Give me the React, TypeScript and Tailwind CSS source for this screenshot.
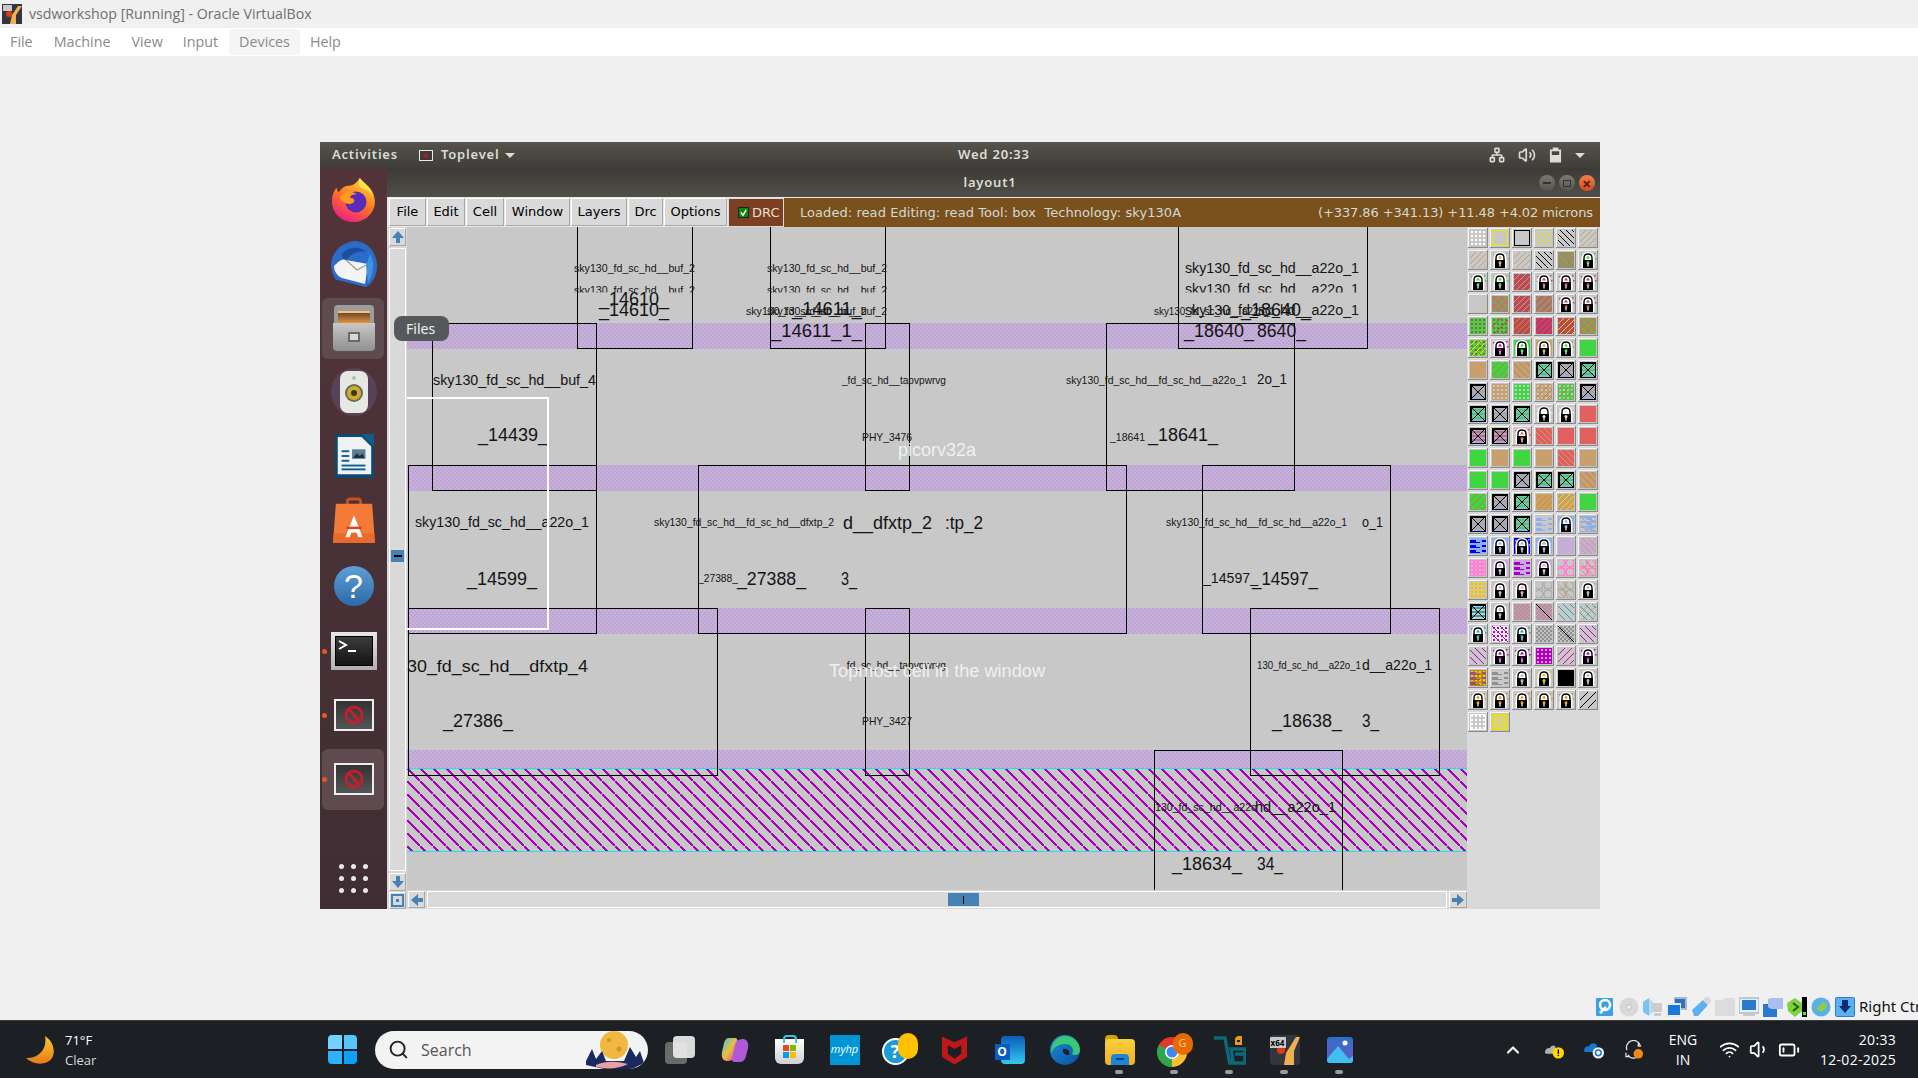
import { BatteryLow, ChevronUp, Network, Search, Volume1, Volume2, Wifi } from "lucide-react";
import React from "react";

const G = "#3fd63f";
const T = "#c8a070";
const R = "#e06060";
const D = "#b84a5a";
const B = "#8cb0f0";
const S = "#c8c8c8";
const M = "#a88468";
const P = "#b000c0";

type Spec = {
  bg?: string;
  f?: [string, string, number];
  b?: [string, string, number];
  dots?: string;
  x?: string;
  lock?: string;
  wave?: string;
  ring?: string;
  check?: string;
  outline?: string;
};

const K: Record<string, Spec> = {
  grid: { bg: S, dots: "#ffffff" },
  oy: { bg: S, outline: "#f0e800" },
  ok: { bg: S, outline: "#000000" },
  yb: { bg: S, b: ["#e8e000", "", 6] },
  kb: { bg: S, b: ["#000000", "", 6] },
  tf: { bg: S, f: [T, "", 6] },
  mg: { bg: M, b: [G, "", 7] },
  df: { bg: D, f: [T, "", 6] },
  s: { bg: S },
  mx: { bg: M, f: [G, "", 8], b: [R, "", 8] },
  mr: { bg: M, f: [D, "", 7] },
  gd: { bg: G, dots: D },
  gdx: { bg: G, dots: D, f: [D, "", 9] },
  do: { bg: D, f: ["#d89000", "", 6] },
  dm: { bg: D, f: ["#e000a0", "", 6] },
  dy: { bg: D, f: ["#f0e000", "", 6] },
  my: { bg: M, f: ["#b0a000", "", 8], b: [G, "", 8] },
  gy: { bg: G, dots: D, f: ["#f0e800", "", 6] },
  g: { bg: G },
  t: { bg: T },
  r: { bg: R },
  gr: { bg: G, f: [R, "", 7] },
  tb: { bg: T, b: [M, "", 7] },
  xg: { bg: B, x: G },
  xt: { bg: B, x: T },
  xr: { bg: B, x: R },
  td: { bg: T, dots: S },
  gw: { bg: G, dots: S },
  tdr: { bg: T, dots: S, f: [M, "", 7] },
  gdr: { bg: G, dots: S, f: [R, "", 7] },
  rt: { bg: R, b: [T, "", 6] },
  to: { bg: T, f: ["#d89000", "", 6] },
  ty: { bg: T, f: ["#f0e000", "", 6] },
  bw: { bg: S, wave: B },
  bwt: { bg: B, wave: S, b: [T, "", 8] },
  bb: { bg: B, wave: "#0000f0" },
  li: { bg: "#c3aed6" },
  lit: { bg: "#c3aed6", b: [T, "", 6] },
  pk: { bg: "#ff80d0", dots: "#d8b0d8" },
  pu: { bg: "#c8a8e0", wave: "#a800c0" },
  pr: { bg: S, ring: "#ff80d0" },
  prt: { bg: S, ring: "#ff80d0", b: [T, "", 7] },
  yc: { bg: "#f0e000", dots: "#e8a0a8", check: "#c8c8a0" },
  sr: { bg: S, ring: "#b0b0b0" },
  srt: { bg: S, ring: "#b0b0b0", b: [T, "", 7] },
  xs: { bg: S, x: "#20a8a8" },
  sp: { bg: "#a8a8a8", check: "#d080a0" },
  spk: { bg: "#a8a8a8", check: "#d080a0", b: ["#000000", "", 16] },
  tl: { bg: S, b: ["#20a8a8", "", 7] },
  tlt: { bg: S, b: ["#20a8a8", "", 7], f: [T, "", 9] },
  wp: { bg: "#f0f0f0", dots: P, b: [P, "", 8] },
  dk: { bg: "#909090", check: "#c0c0c0" },
  dkk: { bg: "#909090", check: "#c0c0c0", b: ["#000000", "", 16] },
  pb: { bg: S, b: [P, "", 7] },
  pd: { bg: P, dots: "#e0a0e0" },
  mf: { bg: S, f: ["#e000a0", "", 7] },
  gold: { bg: "#c09000", wave: "#a05070", dots: "#e8c060" },
  gw2: { bg: S, wave: "#909090" },
  k: { bg: "#000000" },
  kf: { bg: S, f: ["#000000", "", 8] },
  wd: { bg: S, dots: "#ffffff", outline: "#ffffff" },
  yd: { bg: "#d0d0a0", dots: "#f0e000", outline: "#f0e000" },
  lt: { bg: S, lock: T },
  lg: { bg: S, lock: G },
  lr: { bg: S, lock: D },
  lq: { bg: "#e0c0c0", lock: R },
  lm: { bg: "#d8c8d8", lock: "#e000a0" },
  lG: { bg: G, lock: G },
  lT: { bg: T, lock: T },
  lw: { bg: S, lock: "#e8e8e8" },
  lb: { bg: B, lock: B },
  lB: { bg: "#0000f0", lock: B },
  lp: { bg: "#c3aed6", lock: "#e0a0e0" },
  ly: { bg: S, lock: "#f0a0c0" },
  ls: { bg: S, lock: "#b0b0b0" },
  lc: { bg: S, lock: "#20a8a8" },
  lP: { bg: S, lock: P },
  lo: { bg: S, lock: "#e0c000" },
  lO: { bg: S, lock: "#d89000" },
};

const rows: string[] = [
  "grid oy ok yb kb tf",
  "tf lt tf kb mg lg",
  "lg lg df lr lr lr",
  "s mx df mr lr lr",
  "gd gdx do dm dy my",
  "gy lm lG lT lg g",
  "t gr tb xg xt xg",
  "xt td gw tdr gdr xt",
  "xg xt xg lw lw r",
  "xr xr lq rt r r",
  "g t g t rt t",
  "g g xt xg xg tb",
  "gr xt xg to ty g",
  "xt xt xg bw lb bwt",
  "bb lb lB lb li lit",
  "pk lp pu lp pr prt",
  "yc ly ly sr srt ls",
  "xs ls sp spk tl tlt",
  "lc wp lc dk dkk pb",
  "pb lP lP pd mf lP",
  "gold gw2 ls lo k ls",
  "lO lO lO lO lO kf",
  "wd yd",
];

function range(a: number, b: number, step: number) {
  const out: number[] = [];
  for (let i = a; i <= b; i += step) out.push(i);
  return out;
}

const Tile = ({ name }: { name: string }) => {
  const t = K[name];
  return (
    <svg width="20" height="20" viewBox="0 0 20 20" shapeRendering="crispEdges">
      <rect width="20" height="20" fill="#f4f4f4" />
      <path d="M20 0V20H0V19H19V0Z" fill="#8a8a8a" />
      <rect x="1" y="1" width="18" height="18" fill="#c4c4c4" />
      <svg x="2" y="2" width="16" height="16" viewBox="0 0 16 16">
        <rect width="16" height="16" fill={t.bg} />
        {t.check &&
          range(0, 14, 2).map((y) =>
            range(y % 4, 14, 4).map((x) => <rect key={`${x}-${y}`} x={x} y={y} width="2" height="2" fill={t.check} />),
          )}
        {t.dots &&
          range(1, 13, 4).map((y) =>
            range(1, 13, 4).map((x) => <rect key={`${x}-${y}`} x={x} y={y} width="2" height="2" fill={t.dots} />),
          )}
        {t.wave &&
          range(2, 14, 5).map((y) => (
            <path key={y} d={`M0 ${y}H6V${y + 2}H12V${y}H16V${y + 2}H10V${y + 3}H0Z`} fill={t.wave} />
          ))}
        {t.ring &&
          [3, 12].map((y) =>
            [3, 12].map((x) => <circle key={`${x}-${y}`} cx={x} cy={y} r="4" fill="none" stroke={t.ring} strokeWidth="2" />),
          )}
        {t.f &&
          range(-16, 16, t.f[2]).map((i) => (
            <line key={i} x1={i} y1="16" x2={i + 16} y2="0" stroke={t.f![0]} strokeWidth="1.2" />
          ))}
        {t.b &&
          range(-16, 16, t.b[2]).map((i) => (
            <line key={i} x1={i} y1="0" x2={i + 16} y2="16" stroke={t.b![0]} strokeWidth="1.2" />
          ))}
        {t.x && (
          <>
            {[3, 7, 11].map((y) => (
              <rect key={y} x="1" y={y} width="14" height="2" fill={t.x} />
            ))}
            <rect x="0.75" y="0.75" width="14.5" height="14.5" fill="none" stroke="#000" strokeWidth="1.5" />
            <path d="M1 1L15 15M15 1L1 15" stroke="#000" strokeWidth="1.3" />
          </>
        )}
        {t.outline && <rect x="0.5" y="0.5" width="15" height="15" fill="none" stroke={t.outline} />}
      </svg>
      {t.lock && (
        <g shapeRendering="auto">
          {[[3, 4], [16, 3], [3, 9], [17, 8]].map(([x, y]) => (
            <rect key={x * y} x={x} y={y} width="1.5" height="1.5" fill={t.lock} />
          ))}
          <path d="M3.5 18V9Q3.5 2 10 2Q16.5 2 16.5 9V18Z" fill="#fff" />
          <path d="M6 11V8Q6 4 10 4Q14 4 14 8V11" fill="#fff" stroke="#000" strokeWidth="1.4" />
          <path d="M10 5.5L12 8.5H8Z" fill={t.lock} />
          <rect x="5" y="10" width="10" height="8" fill="#000" />
          <circle cx="10" cy="12.5" r="1.5" fill={t.lock} />
          <rect x="9.3" y="13" width="1.4" height="3.5" fill="#ddd" />
        </g>
      )}
    </svg>
  );
};

const Palette = () => (
  <div className="w-[133px] h-full bg-[#d9d9d9] pl-px pt-px flex flex-col gap-[2px]">
    {rows.map((r, i) => (
      <div key={i} className="flex gap-[2px]">
        {r.split(" ").map((n, j) => (
          <Tile key={j} name={n} />
        ))}
      </div>
    ))}
  </div>
);

type Label = [number, number, number, number, string];

const labels: Label[] = [
  [574, 272, 121, 11, "sky130_fd_sc_hd__buf_2"],
  [767, 272, 120, 11, "sky130_fd_sc_hd__buf_2"],
  [746, 315, 121, 11, "sky130_fd_sc_hd__buf_2"],
  [767, 315, 120, 11, "sky130_fd_sc_hd__buf_2"],
  [599, 305, 70, 18, "_14610_"],
  [599, 316, 70, 18, "_14610_"],
  [792, 315, 70, 18, "_14611_"],
  [771, 337, 91, 18, "_14611_1_"],
  [1185, 273, 174, 14, "sky130_fd_sc_hd__a22o_1"],
  [1154, 315, 121, 11, "sky130_fd_sc_hd__a22o_1"],
  [1185, 315, 174, 14, "sky130_fd_sc_hd__a22o_1"],
  [1241, 316, 70, 18, "_18640_"],
  [1184, 337, 70, 18, "_18640_"],
  [1257, 337, 49, 18, "8640_"],
  [433, 385, 163, 14, "sky130_fd_sc_hd__buf_4"],
  [478, 441, 70, 18, "_14439_"],
  [842, 384, 104, 10.5, "_fd_sc_hd__tapvpwrvg"],
  [862, 441, 50, 11, "PHY_3476"],
  [1066, 384, 181, 11, "sky130_fd_sc_hd__fd_sc_hd__a22o_1"],
  [1257, 384, 30, 14, "2o_1"],
  [1110, 441, 35, 11, "_18641"],
  [1148, 441, 70, 18, "_18641_"],
  [415, 527, 174, 14, "sky130_fd_sc_hd__a22o_1"],
  [467, 585, 70, 18, "_14599_"],
  [654, 526, 180, 11, "sky130_fd_sc_hd__fd_sc_hd__dfxtp_2"],
  [843, 529, 89, 18, "d__dfxtp_2"],
  [945, 529, 38, 18, ":tp_2"],
  [698, 582, 40, 11, "_27388_"],
  [737, 585, 69, 18, "_27388_"],
  [841, 585, 16, 18, "3_"],
  [1166, 526, 181, 11, "sky130_fd_sc_hd__fd_sc_hd__a22o_1"],
  [1362, 527, 21, 14, "o_1"],
  [1203, 583, 55, 14, "_14597_"],
  [1252, 585, 66, 18, "_14597_"],
  [407, 672, 181, 17, "30_fd_sc_hd__dfxtp_4"],
  [443, 727, 70, 18, "_27386_"],
  [844, 669, 102, 10.5, ".fd_sc_hd__tapvpwrvg"],
  [862, 725, 50, 11, "PHY_3427"],
  [1257, 669, 104, 11, "130_fd_sc_hd__a22o_1"],
  [1362, 670, 70, 14, "d__a22o_1"],
  [1272, 727, 70, 18, "_18638_"],
  [1362, 727, 17, 18, "3_"],
  [1155, 811, 102, 11, "130_fd_sc_hd__a22o"],
  [1255, 812, 81, 14, "hd__a22o_1"],
  [1172, 870, 70, 18, "_18634_"],
  [1257, 870, 26, 18, "34_"],
];

const clipped: Label[] = [
  [574, 293.5, 121, 11, "sky130_fd_sc_hd__buf_2"],
  [767, 293.5, 120, 11, "sky130_fd_sc_hd__buf_2"],
  [1185, 294, 174, 14, "sky130_fd_sc_hd__a22o_1"],
];

const boxes = [
  [577, 200, 692, 348],
  [770, 200, 885, 348],
  [1178, 200, 1367, 348],
  [432, 323, 596, 490],
  [865, 323, 909, 490],
  [1106, 323, 1294, 490],
  [408, 465, 596, 633],
  [698, 465, 1126, 633],
  [1202, 465, 1390, 633],
  [408, 608, 717, 775],
  [865, 608, 909, 775],
  [1250, 608, 1439, 775],
  [1154, 750, 1342, 920],
];

const LabelText = ({ l, fill = "#141414" }: { l: Label; fill?: string }) => (
  <text x={l[0]} y={l[1]} fontSize={l[3]} textLength={l[2]} lengthAdjust="spacingAndGlyphs" fill={fill}>
    {l[4]}
  </text>
);

const LayoutCanvas = () => (
  <svg
    viewBox="407 227 1060 663"
    className="w-[1060px] h-[663px] block"
    style={{ fontFamily: '"Liberation Sans", sans-serif' }}
  >
    <defs>
      <pattern id="band" width="4" height="4" patternUnits="userSpaceOnUse">
        <rect width="4" height="4" fill="#c8b0dc" />
        <rect width="2" height="2" fill="#bea6d2" />
        <rect x="2" y="2" width="2" height="2" fill="#bea6d2" />
      </pattern>
      <pattern id="hatch" width="13" height="13" patternUnits="userSpaceOnUse" x="407" y="768">
        <rect width="13" height="13" fill="#c8c8c8" />
        <path d="M-2 -2L15 15" stroke="#aa00bb" strokeWidth="2.2" fill="none" shapeRendering="crispEdges" />
      </pattern>
      <clipPath id="cut">
        <rect x="407" y="227" width="1060" height="65.5" />
      </clipPath>
    </defs>
    <rect x="407" y="227" width="1060" height="663" fill="#c8c8c8" />
    <rect x="407" y="323" width="1060" height="26" fill="url(#band)" />
    <rect x="407" y="465" width="1060" height="26" fill="url(#band)" />
    <rect x="407" y="608" width="1060" height="26" fill="url(#band)" />
    <rect x="407" y="750" width="1060" height="18" fill="url(#band)" />
    <rect x="407" y="768" width="1060" height="84" fill="url(#hatch)" />
    <rect x="407" y="768" width="1060" height="1" fill="#20e0e0" />
    <rect x="407" y="851" width="1060" height="1" fill="#20e0e0" />
    {boxes.map(([a, b, c, d]) => (
      <rect key={`${a}-${b}`} x={a + 0.5} y={b + 0.5} width={c - a} height={d - b} fill="none" stroke="#000" />
    ))}
    <g clipPath="url(#cut)">
      {clipped.map((l) => (
        <LabelText key={l[0]} l={l} />
      ))}
    </g>
    {labels.map((l, i) => (
      <LabelText key={i} l={l} />
    ))}
    <rect x="406" y="398" width="142" height="231" fill="none" stroke="#fff" strokeWidth="2" />
    <LabelText l={[898, 456, 78, 18, "picorv32a"]} fill="#f0f0f0" />
    <LabelText l={[829, 677, 216, 18, "Topmost cell in the window"]} fill="#f0f0f0" />
  </svg>
);

const Bevel = ({ className, children }: { className: string; children?: React.ReactNode }) => (
  <div
    className={`flex items-center justify-center bg-[#d9d9d9] border border-t-white border-l-white border-r-[#a8a8a8] border-b-[#a8a8a8] ${className}`}
  >
    {children}
  </div>
);

const Arrow = ({ dir }: { dir: "up" | "down" | "left" | "right" }) => {
  const rot = { up: "rotate-0", right: "rotate-90", down: "rotate-180", left: "-rotate-90" }[dir];
  return (
    <svg viewBox="0 0 14 14" className={`w-[14px] h-[14px] ${rot}`}>
      <path d="M7 1L13 8H9V13H5V8H1Z" fill="#4682b4" />
    </svg>
  );
};

const Dash = ({ v }: { v?: boolean }) => (
  <div className={v ? "w-px h-2 bg-black" : "w-2 h-[2px] bg-black"} />
);

const VScroll = () => (
  <div className="w-[20px] shrink-0 flex flex-col bg-[#d9d9d9] pl-[2px]">
    <Bevel className="h-[18px] w-[17px] mt-px">
      <Arrow dir="up" />
    </Bevel>
    <div className="h-[623px] w-[17px] mt-[2px] border border-white bg-[#d9d9d9] flex flex-col items-center pt-[301px]">
      <div className="w-[13px] h-3 bg-[#4682b4] flex items-center justify-center">
        <Dash />
      </div>
    </div>
    <Bevel className="h-[18px] w-[17px] mt-[2px]">
      <Arrow dir="down" />
    </Bevel>
    <Bevel className="h-[17px] w-[17px] mt-px">
      <div className="w-[13px] h-[13px] border-2 border-[#4682b4] flex items-center justify-center">
        <div className="w-[3px] h-[3px] bg-[#4682b4]" />
      </div>
    </Bevel>
  </div>
);

const HScroll = () => (
  <div className="h-[19px] flex items-center bg-[#d9d9d9] gap-[2px] pl-px">
    <Bevel className="w-[17px] h-[17px]">
      <Arrow dir="left" />
    </Bevel>
    <div className="w-[1020px] h-[17px] border border-white pl-[520px] flex items-center">
      <div className="w-[31px] h-[13px] bg-[#4682b4] flex items-center justify-center">
        <Dash v />
      </div>
    </div>
    <Bevel className="w-[18px] h-[17px]">
      <Arrow dir="right" />
    </Bevel>
  </div>
);

const Firefox = () => (
  <svg viewBox="0 0 48 48" className="w-[46px] h-[46px]">
    <defs>
      <linearGradient id="ff" x1="0.7" y1="0" x2="0.2" y2="1">
        <stop offset="0" stopColor="#ffd43a" />
        <stop offset="0.45" stopColor="#ff7a1f" />
        <stop offset="1" stopColor="#f0148c" />
      </linearGradient>
    </defs>
    <path d="M30 1C33 6 42 9 45 20C49 36 36 47 24 47C10 47 1 37 1 25C1 19 3 14 6 11C6 13 7 15 8 16C11 11 15 9 19 9C23 9 27 6 30 1Z" fill="url(#ff)" />
    <circle cx="26" cy="26" r="11" fill="#5a2bb8" />
    <path d="M9 22C14 14 22 14 27 18C23 18 20 19 20 22C24 22 25 24 24 26C20 30 13 28 9 22Z" fill="#ff9a1f" />
    <path d="M30 1C36 8 42 11 44 20C40 14 34 12 30 11C29 8 29 4 30 1Z" fill="#ffe14a" />
  </svg>
);

const Thunderbird = () => (
  <svg viewBox="0 0 48 48" className="w-[48px] h-[48px]">
    <path d="M24 1C38 1 47 13 47 26C47 38 40 45 36 47C30 46 10 40 6 40C2 34 1 28 1 24C2 13 10 3 24 1Z" fill="#2a6cc8" />
    <path d="M12 14C18 6 30 6 36 12C28 10 20 14 17 20C14 20 12 18 12 14Z" fill="#1b4f9e" />
    <path d="M4 26C8 22 12 18 16 20L38 24L35 44L12 38C8 36 4 32 4 26Z" fill="#f4f4f4" />
    <path d="M16 20L27 30L38 24" fill="none" stroke="#9a9a9a" strokeWidth="1.2" />
    <path d="M40 14C44 20 45 32 38 43L36 26Z" fill="#3f92e0" />
  </svg>
);

const FilesIcon = () => (
  <div className="w-[42px] h-[46px] flex flex-col items-center">
    <div className="w-[40px] h-[18px] rounded-t-sm bg-[#9c9c9c] px-1 pt-[6px]">
      <div className="h-3 bg-gradient-to-b from-[#6b4a2a] to-[#e8943c] border-t-2 border-[#f4c27c]" />
    </div>
    <div className="w-[42px] h-[28px] rounded-b-sm bg-gradient-to-b from-[#c8c8c8] to-[#909090] flex items-center justify-center">
      <div className="w-3 h-[10px] bg-[#d8d8d8] border-2 border-[#6a6a6a]" />
    </div>
  </div>
);

const SpeakerIcon = () => (
  <svg viewBox="0 0 48 48" className="w-[48px] h-[48px]">
    <ellipse cx="24" cy="24" rx="23" ry="24" fill="#57425a" />
    <rect x="10" y="3" width="28" height="42" rx="8" fill="#e8e8e2" />
    <circle cx="24" cy="25" r="9" fill="#6a6a60" />
    <circle cx="24" cy="25" r="7" fill="#d0ac28" />
    <circle cx="24" cy="25" r="3" fill="#3a3a20" />
    <circle cx="24" cy="10" r="2" fill="#bbb" />
  </svg>
);

const WriterIcon = () => (
  <svg viewBox="0 0 44 48" className="w-[42px] h-[48px]">
    <path d="M2 3Q2 1 4 1H32L43 12V44Q43 47 40 47H4Q2 47 2 44Z" fill="#0e4a6e" />
    <path d="M5 4H30L40 14V43H5Z" fill="#eef2f4" />
    <path d="M30 1L43 1V14Z" fill="#0e5f8e" />
    <rect x="9" y="18" width="8" height="2" fill="#0e5f8e" />
    <rect x="9" y="23" width="8" height="2" fill="#0e5f8e" />
    <rect x="9" y="28" width="8" height="2" fill="#0e5f8e" />
    <rect x="20" y="17" width="14" height="10" fill="#5a7f98" />
    <path d="M21 26L25 21L28 24L31 21L33 26Z" fill="#22303a" />
    <rect x="9" y="33" width="25" height="2" fill="#0e5f8e" />
    <rect x="9" y="37" width="25" height="2" fill="#0e5f8e" />
  </svg>
);

const SoftwareIcon = () => (
  <svg viewBox="0 0 44 48" className="w-[42px] h-[46px]">
    <path d="M15 10V5Q15 2 18 2H26Q29 2 29 5V10" fill="none" stroke="#c8501c" strokeWidth="3" />
    <path d="M3 7H41L44 48H0Z" fill="#f47a38" />
    <path d="M0.8 38H43.2L44 48H0Z" fill="#ea6a2c" />
    <path d="M22 19L31 42H26.5L24.8 37H19.2L17.5 42H13L22 19Z" fill="#fff" />
    <rect x="14" y="31" width="16" height="2.5" fill="#e0401c" />
  </svg>
);

const HelpIcon = () => (
  <div
    className="w-10 h-10 rounded-full bg-gradient-to-b from-[#5f9fd6] to-[#2b6aa8] flex items-center justify-center text-white text-[34px] leading-none"
    style={{ fontFamily: '"Liberation Sans", sans-serif' }}
  >
    ?
  </div>
);

const TerminalIcon = () => (
  <div className="w-[46px] h-[38px] bg-gradient-to-b from-[#e8e8e8] to-[#b0b0b0] p-1">
    <div className="w-full h-full bg-gradient-to-b from-[#3c3c3c] to-[#141414] border border-black relative">
      <svg viewBox="0 0 36 28" className="w-full h-full">
        <path d="M3 4L10 8L3 12" fill="none" stroke="#fff" strokeWidth="2" />
        <rect x="12" y="13" width="8" height="2" fill="#fff" />
      </svg>
    </div>
  </div>
);

const NoIcon = () => (
  <div className="w-10 h-8 border-2 border-[#eeeeee] bg-gradient-to-b from-[#333] to-[#555] flex items-center justify-center">
    <svg viewBox="0 0 20 20" className="w-5 h-5">
      <circle cx="10" cy="10" r="8" fill="none" stroke="#c02030" strokeWidth="3" />
      <path d="M5 4.5L15 15.5" stroke="#c02030" strokeWidth="3" />
    </svg>
  </div>
);

const DockItem = ({
  children,
  active,
  dot,
  className = "",
}: {
  children: React.ReactNode;
  active?: boolean;
  dot?: boolean;
  className?: string;
}) => (
  <div className={`relative h-16 flex items-center justify-center ${className}`}>
    {active && <div className="absolute left-[2px] right-[3px] top-[2px] bottom-px rounded-md bg-[#5f4a50]" />}
    {dot && <div className="absolute left-[2px] top-[30px] w-[5px] h-[5px] rounded-full bg-[#e95420]" />}
    <div className="relative">{children}</div>
  </div>
);

const Dock = () => (
  <div className="w-[67px] shrink-0 flex flex-col bg-gradient-to-b from-[#53343a] to-[#3e2e33]">
    <DockItem><Firefox /></DockItem>
    <DockItem><Thunderbird /></DockItem>
    <DockItem active><FilesIcon /></DockItem>
    <DockItem><SpeakerIcon /></DockItem>
    <DockItem><WriterIcon /></DockItem>
    <DockItem><SoftwareIcon /></DockItem>
    <DockItem className="mt-[2px]"><HelpIcon /></DockItem>
    <DockItem className="mt-px" dot><TerminalIcon /></DockItem>
    <DockItem dot><NoIcon /></DockItem>
    <DockItem active dot><NoIcon /></DockItem>
    <div className="mt-auto mb-4 mx-auto grid grid-cols-3 gap-x-[7px] gap-y-[7px]">
      {range(1, 9, 1).map((i) => (
        <div key={i} className="w-[5px] h-[5px] rounded-full bg-[#e8e8e8]" />
      ))}
    </div>
  </div>
);

const menus = [
  ["File", "w-[37px]"],
  ["Edit", "w-[38px]"],
  ["Cell", "w-[38px]"],
  ["Window", "w-[65px]"],
  ["Layers", "w-[56px]"],
  ["Drc", "w-[35px]"],
  ["Options", "w-[63px]"],
];

const Toolbar = () => (
  <div className="h-[30px] flex bg-[#e8e8e8] pt-px text-[13px] text-black" style={{ fontFamily: '"DejaVu Sans", sans-serif' }}>
    <div className="flex pl-[2px] gap-px">
      {menus.map(([m, w]) => (
        <Bevel key={m} className={`h-[28px] ${w}`}>
          {m}
        </Bevel>
      ))}
    </div>
    <div className="w-[56px] ml-px h-[29px] bg-[#7c3f22] flex items-center gap-1 pl-[10px] text-[#e8e0d0] border border-[#d9d9d9]">
      <div className="w-[9px] h-[9px] bg-white outline outline-[#222] flex items-center justify-center">
        <svg viewBox="0 0 10 10" className="w-[9px] h-[9px]">
          <rect width="10" height="10" fill="#0a8a0a" />
          <path d="M2 5L4.5 8L8 2" stroke="#fff" strokeWidth="1.6" fill="none" />
        </svg>
      </div>
      DRC
    </div>
    <div className="flex-1 h-[29px] bg-[#7a511d] flex items-center justify-between pl-4 pr-[7px] text-[#d3d9d2]">
      <span className="whitespace-pre tracking-[0.06px]">Loaded: read Editing: read Tool: box  Technology: sky130A</span>
      <span className="tracking-[-0.1px]">(+337.86 +341.13) +11.48 +4.02 microns</span>
    </div>
  </div>
);

const WinBtn = ({ children, red }: { children: React.ReactNode; red?: boolean }) => (
  <div
    className={`w-4 h-4 rounded-full flex items-center justify-center ${red ? "bg-gradient-to-b from-[#f08050] to-[#d84818]" : "bg-gradient-to-b from-[#7a7a72] to-[#55554e]"}`}
  >
    {children}
  </div>
);

const VirtualMachine = () => (
  <div
    className="relative ml-[320px] mt-[86px] w-[1280px] h-[767px] flex flex-col overflow-hidden"
    style={{ fontFamily: '"Noto Sans", sans-serif' }}
  >
    <div className="h-[26px] relative flex items-center bg-gradient-to-b from-[#56534b] to-[#3f3e39] text-[13px] font-semibold text-[#dcdcd4] tracking-[0.8px]">
      <span className="ml-3">Activities</span>
      <div className="ml-[21px] w-[14px] h-[11px] border border-[#e8e8e8] bg-[#3a3a3a] flex items-center justify-center">
        <div className="w-[5px] h-[5px] rounded-full bg-[#a02020]" />
      </div>
      <span className="ml-[8px]">Toplevel</span>
      <div className="ml-[6px] w-0 h-0 border-x-[5px] border-x-transparent border-t-[5px] border-t-[#dcdcd4]" />
      <span className="absolute left-[638px] top-[3px]">Wed 20:33</span>
      <div className="ml-auto flex items-center mr-[15px] gap-[13px]">
        <Network size={16} strokeWidth={2.4} />
        <Volume2 size={18} strokeWidth={2.2} />
        <svg viewBox="0 0 14 16" className="w-[13px] h-4">
          <path d="M4 0H10V2H13V16H1V2H4Z" fill="#dcdcd4" />
          <rect x="3" y="4" width="8" height="4" fill="#45443e" />
        </svg>
        <div className="w-0 h-0 border-x-[5px] border-x-transparent border-t-[5px] border-t-[#dcdcd4]" />
      </div>
    </div>
    <div className="flex flex-1 min-h-0">
      <Dock />
      <div className="flex-1 flex flex-col min-w-0">
        <div className="h-[29px] shrink-0 relative flex items-center justify-center bg-gradient-to-b from-[#3b3a36] to-[#504f49] text-[13px] font-semibold text-[#dcdcd4] tracking-[0.8px]">
          <span className="ml-[-7px]">layout1</span>
          <div className="absolute right-[5px] top-[7px] flex gap-1">
            <WinBtn><div className="w-2 h-[2px] bg-[#333]" /></WinBtn>
            <WinBtn><div className="w-2 h-[7px] border border-[#333]" /></WinBtn>
            <WinBtn red><span className="text-[11px] leading-none text-[#402010]">✕</span></WinBtn>
          </div>
        </div>
        <Toolbar />
        <div className="flex flex-1 min-h-0 bg-[#d9d9d9]">
          <VScroll />
          <div className="flex flex-col w-[1060px]">
            <LayoutCanvas />
            <HScroll />
          </div>
          <Palette />
        </div>
      </div>
    </div>
    <div className="absolute left-[74px] top-[174px] h-[25px] w-[55px] pl-3 flex items-center rounded-lg bg-[#55595b] text-[14px] text-[#eeeeee]">
      Files
    </div>
  </div>
);

const statusIcons = [
  <svg key="a" viewBox="0 0 20 20" className="w-5 h-5"><rect x="1" y="1" width="17" height="18" rx="1" fill="#3aa0e8" /><circle cx="10" cy="8" r="5" fill="none" stroke="#fff" strokeWidth="2.5" /><path d="M5 16L11 10" stroke="#fff" strokeWidth="2.5" /></svg>,
  <svg key="b" viewBox="0 0 20 20" className="w-5 h-5"><circle cx="10" cy="10" r="9.5" fill="#d8d8d8" /><circle cx="10" cy="10" r="2.5" fill="#f0f0f0" stroke="#bbb" /></svg>,
  <svg key="c" viewBox="0 0 20 20" className="w-5 h-5"><path d="M0 5L6 1V19L0 15Z" fill="#7cc0f0" /><path d="M6 1L10 5V15L6 19Z" fill="#b8dcf4" /><rect x="9" y="6" width="10" height="9" fill="#cccccc" /><rect x="11" y="16" width="7" height="3" fill="#ccc" /></svg>,
  <svg key="d" viewBox="0 0 20 20" className="w-5 h-5"><rect x="7" y="0" width="13" height="13" fill="#aab8c8" /><rect x="8" y="2" width="10" height="9" fill="#2a70c8" /><rect x="0" y="6" width="14" height="14" fill="#e8e8e8" /><rect x="1" y="8" width="12" height="10" fill="#1a78d8" /></svg>,
  <svg key="e" viewBox="0 0 20 20" className="w-5 h-5"><path d="M1 13L12 3L17 8L7 19H3Z" fill="#5ab0f0" /><rect x="13" y="0" width="7" height="6" transform="rotate(45 16 3)" fill="#d8d8d8" /></svg>,
  <svg key="f" viewBox="0 0 20 20" className="w-5 h-5"><path d="M0 3H8L10 1H20V19H0Z" fill="#dcdcdc" /></svg>,
  <svg key="g" viewBox="0 0 20 20" className="w-5 h-5"><rect x="0" y="1" width="20" height="15" fill="#e8f0f8" stroke="#8aa0b8" /><rect x="3" y="3" width="14" height="10" fill="#2a78d0" /><rect x="4" y="16" width="12" height="3" fill="#c8c8c8" /></svg>,
  <svg key="h" viewBox="0 0 20 20" className="w-5 h-5"><rect x="0" y="7" width="14" height="13" fill="#2a78d0" /><path d="M5 2L8 1H20V12H8L5 10Z" fill="#a8c0f0" /></svg>,
  <svg key="i" viewBox="0 0 20 20" className="w-5 h-5"><path d="M8 1L15 6V14L8 20L1 14L0 6Z" fill="#80d040" /><path d="M6 6L11 10L6 14" fill="none" stroke="#206010" strokeWidth="2" /><rect x="15" y="0" width="5" height="20" fill="#000" /><rect x="16" y="15" width="3" height="3" fill="#40ff20" /></svg>,
  <svg key="j" viewBox="0 0 20 20" className="w-5 h-5"><circle cx="10" cy="10" r="9.5" fill="#5ab0e8" /><path d="M5 12L12 5L17 8L11 15Z" fill="#90d040" /></svg>,
  <svg key="k" viewBox="0 0 20 20" className="w-5 h-5"><rect x="0.5" y="0.5" width="19" height="19" rx="1" fill="#5ab0f0" stroke="#2a80d0" /><path d="M7 3H13V9H16L10 16L4 9H7Z" fill="#102a70" /></svg>,
];

const StatusBar = () => (
  <div className="mt-auto h-[23px] mb-[2px] pl-[1595px] flex items-center gap-1 whitespace-nowrap overflow-hidden [&>svg]:shrink-0">
    {statusIcons}
    <span className="shrink-0 text-[15px] text-[#111] leading-none" style={{ fontFamily: '"Noto Sans", sans-serif' }}>
      Right Ctrl
    </span>
  </div>
);

const Win11Logo = () => (
  <div className="grid grid-cols-2 gap-[2px] w-[29px] h-[29px]">
    <div className="rounded-tl-sm bg-[#72d2ff]" />
    <div className="rounded-tr-sm bg-[#55c6fc]" />
    <div className="rounded-bl-sm bg-[#2db2fb]" />
    <div className="rounded-br-sm bg-[#0d9ffa]" />
  </div>
);

const taskIcons: React.ReactNode[] = [
  <div key="tv" className="relative w-[30px] h-[28px]">
    <div className="absolute left-0 bottom-0 w-[22px] h-[22px] rounded-sm bg-[#6a6a6a]" />
    <div className="absolute right-0 top-0 w-[22px] h-[22px] rounded-sm bg-[#eeeeee] opacity-90" />
  </div>,
  <svg key="cp" viewBox="0 0 28 28" className="w-7 h-7">
    <defs>
      <linearGradient id="cp1" x1="0" y1="0" x2="1" y2="1">
        <stop offset="0" stopColor="#3cc0f0" /><stop offset="0.5" stopColor="#e8c040" /><stop offset="1" stopColor="#e04090" />
      </linearGradient>
    </defs>
    <path d="M8 2H14C18 2 16 8 15 12L13 20C12 24 10 25 6 25C2 25 0 21 1 16L3 7C4 4 5 2 8 2Z" fill="url(#cp1)" />
    <path d="M22 3C26 3 28 7 27 12L25 20C24 24 22 26 18 26H13C10 26 11 22 12 18L14 9C15 5 18 3 22 3Z" fill="#b058d8" />
  </svg>,
  <div key="st" className="relative w-[29px] h-[29px] pt-1">
    <div className="absolute left-[8px] top-0 w-[14px] h-[8px] rounded-t-sm border-2 border-b-0 border-[#3cc0f0]" />
    <div className="w-full h-[25px] rounded-b-md bg-gradient-to-b from-white to-[#d0d0d0] grid grid-cols-2 gap-px px-[8px] py-[6px]">
      <div className="bg-[#e8481c]" /><div className="bg-[#7cbb00]" /><div className="bg-[#00a1f1]" /><div className="bg-[#ffbb00]" />
    </div>
  </div>,
  <div key="hp" className="w-[30px] h-[30px] bg-[#0096d6] flex items-center justify-center text-white text-[11px] italic">
    myhp
  </div>,
  <div key="hl" className="relative w-9 h-[30px]">
    <div className="absolute left-0 top-[3px] w-[27px] h-[27px] rounded-full bg-[#1e9ad6] border-2 border-white flex items-center justify-center text-white text-[18px] font-bold">?</div>
    <div className="absolute right-0 top-[-2px] w-5 h-[26px] rounded-full bg-[#ffc000]" />
  </div>,
  <svg key="mc" viewBox="0 0 28 30" className="w-[27px] h-[30px]">
    <path d="M1 1L14 7L27 1V22L14 30L1 22ZM7 10V19L14 24L21 19V10L14 14Z" fill="#c01818" fillRule="evenodd" />
  </svg>,
  <div key="ol" className="relative w-[30px] h-[28px]">
    <div className="absolute right-0 top-0 w-[24px] h-[28px] rounded-sm bg-gradient-to-b from-[#0f5cb8] to-[#38c8f0]" />
    <div className="absolute left-0 top-[8px] w-[15px] h-[16px] bg-[#0a5cc0] text-white text-[12px] font-bold flex items-center justify-center">O</div>
  </div>,
  <svg key="ed" viewBox="0 0 30 30" className="w-[30px] h-[30px]">
    <defs>
      <linearGradient id="ed1" x1="0" y1="0" x2="1" y2="1">
        <stop offset="0" stopColor="#1a8fd8" /><stop offset="1" stopColor="#0a4ea0" />
      </linearGradient>
    </defs>
    <circle cx="15" cy="15" r="15" fill="url(#ed1)" />
    <path d="M15 1C24 1 30 8 30 15C30 20 26 21 22 19C25 14 21 9 15 9C9 9 4 12 1 18C1 8 7 1 15 1Z" fill="#38c878" />
    <path d="M13 14C18 13 20 17 19 20C15 20 12 18 13 14Z" fill="#1c2025" />
  </svg>,
  <div key="fe" className="relative w-[30px] h-[30px]">
    <div className="absolute left-0 top-0 w-[13px] h-[6px] rounded-t-sm bg-[#d8a000]" />
    <div className="absolute left-0 top-[4px] w-full h-[26px] bg-gradient-to-b from-[#f8d040] to-[#f0b020] rounded-sm" />
    <div className="absolute left-[6px] bottom-0 w-[18px] h-[11px] rounded-t-sm bg-[#1a86d8] flex items-center justify-center">
      <div className="w-2 h-[2px] bg-[#0a3a70]" />
    </div>
  </div>,
  <div key="ch" className="relative w-9 h-[34px]">
    <svg viewBox="0 0 30 30" className="absolute left-0 bottom-0 w-[30px] h-[30px]">
      <circle cx="15" cy="15" r="15" fill="#e0392c" />
      <path d="M15 15L2 22.5A15 15 0 0 0 15 30Z" fill="#2ea84f" />
      <path d="M2 22.5A15 15 0 0 1 2 8L15 15Z" fill="#2ea84f" />
      <path d="M15 15H30A15 15 0 0 1 15 30Z" fill="#fbc02d" />
      <circle cx="15" cy="15" r="7" fill="#fff" />
      <circle cx="15" cy="15" r="5.5" fill="#4285f4" />
    </svg>
    <div className="absolute right-0 top-0 w-5 h-[22px] rounded-full bg-[#e86a00] text-[#f0d0a0] text-[11px] flex items-center justify-center">G</div>
  </div>,
  <svg key="vs" viewBox="0 0 32 30" className="w-8 h-[30px]">
    <path d="M0 3H11L15 25H19L17 14H31V19H21M31 19V28H14" fill="none" stroke="#0f6878" strokeWidth="3.4" />
    <path d="M21 10V4Q21 2 24 1H28V10Z" fill="#e89a18" />
    <rect x="23" y="5" width="3" height="2" fill="#1c2025" />
  </svg>,
  <div key="vb" className="relative w-[30px] h-[30px] bg-[#33363f] rounded-sm overflow-hidden">
    <svg viewBox="0 0 30 30" className="w-full h-full">
      <path d="M14 30L16 18L26 2H30L24 16V30Z" fill="#f0b050" />
      <circle cx="11" cy="15" r="4" fill="#e03a10" />
    </svg>
    <div className="absolute left-0 top-[2px] w-4 h-[11px] bg-[#c8c8c8] text-[8px] leading-[11px] font-bold text-black text-center">x64</div>
  </div>,
  <svg key="ph" viewBox="0 0 26 26" className="w-[26px] h-[26px]">
    <defs>
      <linearGradient id="ph1" x1="0" y1="0" x2="0" y2="1">
        <stop offset="0" stopColor="#2d6fcb" /><stop offset="1" stopColor="#6a5ac0" />
      </linearGradient>
    </defs>
    <rect width="26" height="26" rx="3" fill="url(#ph1)" />
    <path d="M0 22L11 9L22 22L26 19V23Q26 26 23 26H3Q0 26 0 23Z" fill="#40c0f0" />
    <circle cx="18" cy="6" r="2.5" fill="#fff" />
  </svg>,
];

const running = [8, 9, 10, 11, 12];

const Taskbar = () => (
  <div
    className="h-[58px] shrink-0 bg-[#1c2025] border-t border-[#3a3a3a] flex items-center text-white text-[13px]"
    style={{ fontFamily: '"Open Sans", sans-serif' }}
  >
    <svg viewBox="0 0 28 28" className="ml-[26px] w-7 h-7 shrink-0">
      <defs>
        <linearGradient id="moon" x1="0" y1="0" x2="0" y2="1">
          <stop offset="0" stopColor="#f8c830" /><stop offset="1" stopColor="#e87a18" />
        </linearGradient>
      </defs>
      <path d="M19 0C27 5 30 15 26 22C22 29 8 30 0 22C10 23 22 15 19 0Z" fill="url(#moon)" />
    </svg>
    <div className="ml-[11px] w-[60px] leading-5">
      <div>71°F</div>
      <div className="text-[#d8d8d8]">Clear</div>
    </div>
    <div className="ml-[203px]">
      <Win11Logo />
    </div>
    <div className="ml-[18px] w-[273px] h-[38px] rounded-full bg-[#f3f3f3] flex items-center pl-[13px] relative overflow-hidden">
      <Search size={21} className="text-[#222]" strokeWidth={2.2} />
      <span className="ml-3 text-[16px] text-[#555]">Search</span>
      <svg viewBox="0 0 60 38" className="absolute right-[4px] top-0 w-[60px] h-[38px]">
        <circle cx="30" cy="14" r="14" fill="#f0b840" />
        <circle cx="25" cy="9" r="2" fill="#d89028" />
        <circle cx="35" cy="18" r="2.5" fill="#d89028" />
        <path d="M2 30L8 18L12 28L18 20L22 30H40L46 16L52 26L56 20L60 32L48 38H20L2 34Z" fill="#1a2a60" />
        <path d="M12 34Q26 28 44 33Q30 40 12 36Z" fill="#e8a0a0" />
      </svg>
    </div>
    <div className="ml-[4px] flex">
      {taskIcons.map((icon, i) => (
        <div key={i} className="relative w-[55px] h-[38px] flex items-center justify-center">
          {icon}
          {running.includes(i) && (
            <div className="absolute left-[23px] bottom-[-5px] w-2 h-1 rounded-full bg-[#9a9a9a]" />
          )}
        </div>
      ))}
    </div>
    <div className="ml-auto flex items-center pr-[22px]">
      <ChevronUp size={20} strokeWidth={2.6} className="text-[#f0f0f0]" />
      <svg viewBox="0 0 22 20" className="ml-[21px] w-[21px] h-5">
        <path d="M1 13Q1 8 6 8Q8 4 12 6V14H3Q1 14 1 13Z" fill="#b0b0b0" />
        <circle cx="15" cy="13" r="6" fill="#ffd800" />
        <rect x="14.3" y="9.5" width="1.4" height="4.5" fill="#000" />
        <rect x="14.3" y="15" width="1.4" height="1.4" fill="#000" />
      </svg>
      <svg viewBox="0 0 22 20" className="ml-[19px] w-[21px] h-5">
        <path d="M0 11Q0 6 5 6Q8 1 13 4L14 12H2Q0 12 0 11Z" fill="#1878d0" />
        <circle cx="15" cy="13" r="6" fill="#f0f0f0" />
        <circle cx="15" cy="13" r="3" fill="none" stroke="#1878d0" strokeWidth="1.5" />
      </svg>
      <svg viewBox="0 0 22 20" className="ml-[19px] w-[21px] h-5">
        <path d="M3 10A7 7 0 0 1 17 5M15 3V6H18M17 12A7 7 0 0 1 4 15M2 13V17H6" fill="none" stroke="#e8e8e8" strokeWidth="1.3" />
        <circle cx="15" cy="14" r="5" fill="#f08a10" />
      </svg>
      <div className="ml-[22px] w-[32px] text-center text-[14px] leading-5">
        <div>ENG</div>
        <div>IN</div>
      </div>
      <Wifi size={21} className="ml-[20px]" />
      <Volume1 size={21} className="ml-[9px]" />
      <BatteryLow size={22} className="ml-[8px]" />
      <div className="ml-[18px] w-[78px] text-right text-[14px] leading-5 tracking-[0.3px]">
        <div>20:33</div>
        <div>12-02-2025</div>
      </div>
    </div>
  </div>
);

const App = () => {
  return (
    <div className="w-[1918px] h-[1078px] flex flex-col bg-[#f0f0f0] overflow-hidden">
      <div
        className="h-7 shrink-0 flex items-center pl-[2px] text-[14.2px] text-[#6f6f6f]"
        style={{ fontFamily: '"Open Sans", sans-serif' }}
      >
        <svg viewBox="0 0 20 20" className="w-5 h-5">
          <rect width="20" height="20" fill="#33363f" />
          <path d="M8 20L10 11L16 2H20L14 11V20Z" fill="#f0b050" />
          <circle cx="7" cy="10" r="3" fill="#e03a10" />
          <rect x="1" y="1" width="9" height="6" fill="#c8c8c8" />
        </svg>
        <span className="ml-[7px]">vsdworkshop [Running] - Oracle VirtualBox</span>
      </div>
      <div
        className="h-7 shrink-0 flex items-center bg-white text-[14.3px] text-[#8a8a8a]"
        style={{ fontFamily: '"Open Sans", sans-serif' }}
      >
        <span className="ml-[10px]">File</span>
        <span className="ml-[21px]">Machine</span>
        <span className="ml-[21px]">View</span>
        <span className="ml-[20px]">Input</span>
        <span className="ml-[11px] h-[26px] px-[10px] flex items-center rounded bg-[#f5f5f5]">Devices</span>
        <span className="ml-[10px]">Help</span>
      </div>
      <div className="flex-1 flex flex-col min-h-0">
        <VirtualMachine />
        <StatusBar />
      </div>
      <Taskbar />
    </div>
  );
};

export default App;
